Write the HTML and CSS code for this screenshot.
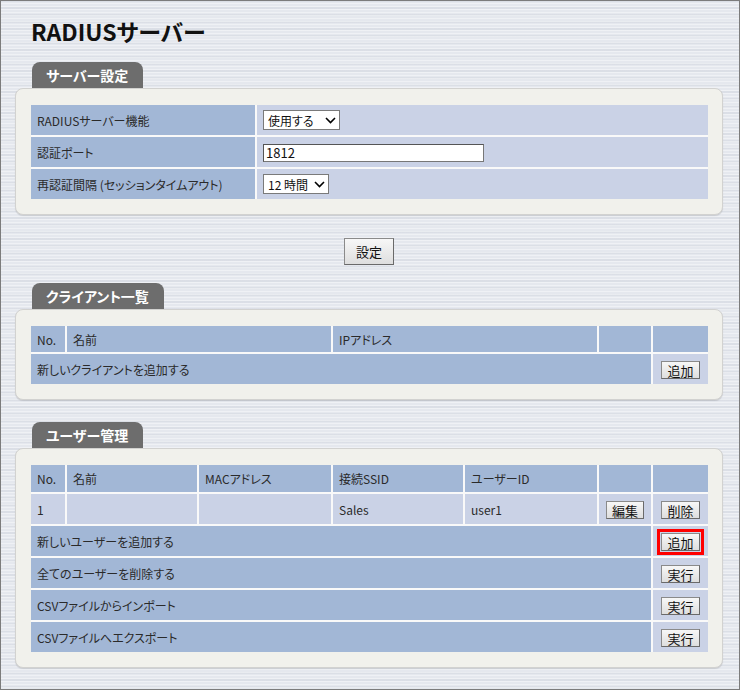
FILE: index.html
```html
<!DOCTYPE html>
<html lang="ja">
<head>
<meta charset="UTF-8">
<meta name="viewport" content="width=device-width, initial-scale=1.0">
<title>RADIUSサーバー</title>
<link rel="stylesheet" href="styles.css">
</head>
<body>
<div class="page">
  <h1 class="page-title">RADIUSサーバー</h1>

  <!-- サーバー設定 -->
  <div class="section">
    <div class="section-tab">サーバー設定</div>
    <div class="panel">
      <table class="grid settings">
        <colgroup><col class="col-label"><col></colgroup>
        <tr>
          <td class="head">RADIUSサーバー機能</td>
          <td class="cell">
            <span class="select-wrap">
              <select class="select select-use">
                <option>使用する</option>
                <option>使用しない</option>
              </select>
              <svg class="chevron" width="11" height="7" viewBox="0 0 11 7"><path d="M1 1 L5.5 5.5 L10 1" fill="none" stroke="#000" stroke-width="1.6"/></svg>
            </span>
          </td>
        </tr>
        <tr>
          <td class="head">認証ポート</td>
          <td class="cell"><input class="text-input" type="text" value="1812"></td>
        </tr>
        <tr>
          <td class="head">再認証間隔 (セッションタイムアウト)</td>
          <td class="cell">
            <span class="select-wrap">
              <select class="select select-hour">
                <option>12 時間</option>
                <option>24 時間</option>
              </select>
              <svg class="chevron" width="11" height="7" viewBox="0 0 11 7"><path d="M1 1 L5.5 5.5 L10 1" fill="none" stroke="#000" stroke-width="1.6"/></svg>
            </span>
          </td>
        </tr>
      </table>
    </div>
  </div>

  <div class="submit-row">
    <button class="btn btn-large" type="button">設定</button>
  </div>

  <!-- クライアント一覧 -->
  <div class="section">
    <div class="section-tab">クライアント一覧</div>
    <div class="panel">
      <table class="grid">
        <colgroup>
          <col class="col-no"><col class="col-266"><col class="col-266"><col class="col-btn"><col>
        </colgroup>
        <tr class="row-header">
          <td class="head">No.</td>
          <td class="head">名前</td>
          <td class="head">IPアドレス</td>
          <td class="head"></td>
          <td class="head"></td>
        </tr>
        <tr>
          <td class="head" colspan="4">新しいクライアントを追加する</td>
          <td class="cell center"><button class="btn" type="button">追加</button></td>
        </tr>
      </table>
    </div>
  </div>

  <!-- ユーザー管理 -->
  <div class="section">
    <div class="section-tab">ユーザー管理</div>
    <div class="panel">
      <table class="grid">
        <colgroup>
          <col class="col-no"><col class="col-132"><col class="col-134"><col class="col-132"><col class="col-134"><col class="col-btn"><col>
        </colgroup>
        <tr class="row-header row-header-tall">
          <td class="head">No.</td>
          <td class="head">名前</td>
          <td class="head">MACアドレス</td>
          <td class="head">接続SSID</td>
          <td class="head">ユーザーID</td>
          <td class="head"></td>
          <td class="head"></td>
        </tr>
        <tr>
          <td class="cell">1</td>
          <td class="cell"></td>
          <td class="cell"></td>
          <td class="cell">Sales</td>
          <td class="cell">user1</td>
          <td class="cell center"><button class="btn" type="button">編集</button></td>
          <td class="cell center"><button class="btn" type="button">削除</button></td>
        </tr>
        <tr>
          <td class="head" colspan="6">新しいユーザーを追加する</td>
          <td class="cell center"><button class="btn btn-marked" type="button">追加</button></td>
        </tr>
        <tr>
          <td class="head" colspan="6">全てのユーザーを削除する</td>
          <td class="cell center"><button class="btn" type="button">実行</button></td>
        </tr>
        <tr>
          <td class="head" colspan="6">CSVファイルからインポート</td>
          <td class="cell center"><button class="btn" type="button">実行</button></td>
        </tr>
        <tr>
          <td class="head" colspan="6">CSVファイルへエクスポート</td>
          <td class="cell center"><button class="btn" type="button">実行</button></td>
        </tr>
      </table>
    </div>
  </div>
</div>
</body>
</html>
```

FILE: styles.css
```css
html, body {
  margin: 0;
  padding: 0;
}
body {
  font-family: "Noto Sans CJK JP", "Noto Sans", sans-serif;
  font-feature-settings: "palt";
  color: #2a2a2a;
  background-color: #e5e8ee;
  background-image:
    repeating-linear-gradient(180deg, rgba(255,255,255,0.4) 0, rgba(255,255,255,0.4) 1px, transparent 1px, transparent 3px),
    repeating-linear-gradient(180deg, rgba(120,130,150,0.09) 0, rgba(120,130,150,0.09) 2px, transparent 2px, transparent 7px);
}
.page {
  box-sizing: border-box;
  min-height: 690px;
  padding: 0 16px 20px 14px;
  border: 1px solid #7c7c7c;
}
.page-title {
  margin: 0;
  padding: 14px 0 0 16px;
  font-size: 23px;
  line-height: 32px;
  font-weight: bold;
  color: #111;
}

.section {
  margin-top: 15px;
}
.section + .section {
  margin-top: 22px;
}
.submit-row + .section {
  margin-top: 18px;
}
.section-tab {
  display: inline-block;
  margin-left: 17px;
  height: 26px;
  line-height: 27px;
  padding: 0 15px 0 14px;
  font-size: 14px;
  font-weight: bold;
  color: #fff;
  background: #6d6d6d;
  border-radius: 8px 8px 0 0;
  vertical-align: bottom;
}
.panel {
  background: #f1f1ec;
  border: 1px solid #d2d2d0;
  border-radius: 8px;
  box-shadow: 0 1px 1px rgba(0,0,0,0.12);
  padding: 16px 14px 15px 15px;
}

/* テーブル */
.grid {
  width: 100%;
  table-layout: fixed;
  border-collapse: collapse;
  border-style: hidden;
  font-size: 12px;
}
.grid td {
  border: 2px solid #f9f9f9;
  height: 30px;
  padding: 0 6px;
  vertical-align: middle;
  white-space: nowrap;
}
.grid .row-header td {
  height: 26px;
}
.grid .row-header-tall td {
  height: 27px;
}
.settings td {
  height: 30px;
}
.grid .head {
  background: #a2b7d6;
}
.grid .cell {
  background: #cad2e6;
}
.grid .center {
  text-align: center;
  padding: 0;
}
.col-label { width: 225px; }
.col-no { width: 35px; }
.col-266 { width: 266px; }
.col-132 { width: 132px; }
.col-134 { width: 134px; }
.col-btn { width: 54px; }

/* 入力 */
.select-wrap {
  position: relative;
  display: inline-block;
  vertical-align: middle;
}
.select {
  -webkit-appearance: none;
  appearance: none;
  box-sizing: border-box;
  height: 20px;
  margin: 0;
  padding: 0 0 0 4px;
  font-family: inherit;
  font-feature-settings: "palt";
  font-size: 12px;
  color: #111;
  background: #fff;
  border: 1px solid #7a7a7a;
  border-radius: 0;
}
.select-use { width: 77px; }
.select-hour { width: 66px; }
.chevron {
  position: absolute;
  right: 4px;
  top: 7px;
  pointer-events: none;
}
.text-input {
  box-sizing: border-box;
  width: 221px;
  height: 18px;
  margin: 0;
  padding: 0 2px;
  font-family: inherit;
  font-size: 13px;
  color: #111;
  border: 1px solid #777;
  border-top-color: #555;
  border-left-color: #555;
  vertical-align: middle;
}

/* ボタン */
.btn {
  box-sizing: border-box;
  height: 18px;
  margin: 0;
  padding: 0 5px;
  font-family: inherit;
  font-feature-settings: "palt";
  font-size: 13px;
  line-height: 15px;
  color: #111;
  background: linear-gradient(#f7f7f7, #dedede);
  border: 1px solid #8a8a8a;
  border-right-color: #6a6a6a;
  border-bottom-color: #6a6a6a;
  border-radius: 0;
  vertical-align: middle;
}
.btn-large {
  height: 27px;
  padding: 0 11px;
}
.btn-marked {
  outline: 3px solid #ff0000;
  outline-offset: 1px;
}
.submit-row {
  text-align: center;
  margin-top: 22px;
}
```
